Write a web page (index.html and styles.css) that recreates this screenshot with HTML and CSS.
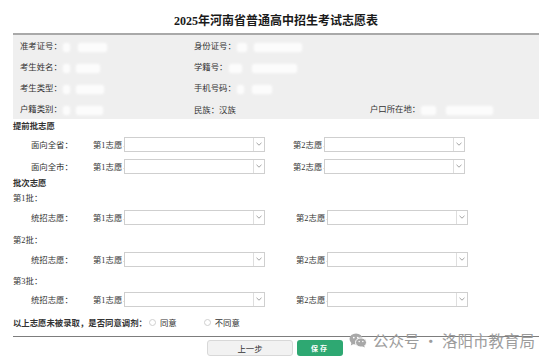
FILE: index.html
```html
<!DOCTYPE html>
<html lang="zh-CN">
  <head>
    <meta charset="UTF-8" />
    <title>2025年河南省普通高中招生考试志愿表</title>
    <link rel="stylesheet" href="styles.css">
  </head>
  <body>
    <div class="page">
      <h1 class="title">2025年河南省普通高中招生考试志愿表</h1>

      <div class="info">
        <div class="info-row">
          <span>准考证号：<i class="blur b7"></i><i class="blur b29 gap8"></i></span>
          <span>身份证号：<i class="blur b10"></i><i class="blur b48 gap7"></i></span>
          <span></span>
        </div>
        <div class="info-row">
          <span>考生姓名：<i class="blur b7"></i><i class="blur b24 gap6"></i></span>
          <span>学籍号：<i class="blur b13"></i><i class="blur b45 gap10"></i></span>
          <span></span>
        </div>
        <div class="info-row">
          <span>考生类型：<i class="blur b7"></i><i class="blur b28 gap6"></i></span>
          <span>手机号码：<i class="blur b7"></i><i class="blur b20 gap8"></i></span>
          <span></span>
        </div>
        <div class="info-row">
          <span>户籍类别：<i class="blur b7"></i><i class="blur b27 gap6"></i></span>
          <span>民族：汉族</span>
          <span>户口所在地：<i class="blur b15"></i><i class="blur b47 gap10"></i></span>
        </div>
      </div>

      <div class="sec-title">提前批志愿</div>
      <div class="choice-row">
        <span class="lbl">面向全省：</span>
        <div class="pick"><span class="name">第1志愿<b>-</b></span><div class="select"><span class="arrow"><svg width="6" height="4" viewBox="0 0 6 4"><path d="M0.5 0.8 L3 3.2 L5.5 0.8" fill="none" stroke="#999" stroke-width="0.9"/></svg></span></div></div>
        <div class="pick second"><span class="name">第2志愿<b>-</b></span><div class="select"><span class="arrow"><svg width="6" height="4" viewBox="0 0 6 4"><path d="M0.5 0.8 L3 3.2 L5.5 0.8" fill="none" stroke="#999" stroke-width="0.9"/></svg></span></div></div>
      </div>
      <div class="choice-row spaced">
        <span class="lbl">面向全市：</span>
        <div class="pick"><span class="name">第1志愿<b>-</b></span><div class="select"><span class="arrow"><svg width="6" height="4" viewBox="0 0 6 4"><path d="M0.5 0.8 L3 3.2 L5.5 0.8" fill="none" stroke="#999" stroke-width="0.9"/></svg></span></div></div>
        <div class="pick second"><span class="name">第2志愿<b>-</b></span><div class="select"><span class="arrow"><svg width="6" height="4" viewBox="0 0 6 4"><path d="M0.5 0.8 L3 3.2 L5.5 0.8" fill="none" stroke="#999" stroke-width="0.9"/></svg></span></div></div>
      </div>

      <div class="sec-title tall">批次志愿</div>
      <div class="batch">第1批：</div>
      <div class="choice-row batch-row">
        <span class="lbl">统招志愿：</span>
        <div class="pick"><span class="name">第1志愿<b>-</b></span><div class="select"><span class="arrow"><svg width="6" height="4" viewBox="0 0 6 4"><path d="M0.5 0.8 L3 3.2 L5.5 0.8" fill="none" stroke="#999" stroke-width="0.9"/></svg></span></div></div>
        <div class="pick second wide"><span class="name">第2志愿<b>-</b></span><div class="select"><span class="arrow"><svg width="6" height="4" viewBox="0 0 6 4"><path d="M0.5 0.8 L3 3.2 L5.5 0.8" fill="none" stroke="#999" stroke-width="0.9"/></svg></span></div></div>
      </div>
      <div class="batch b2">第2批：</div>
      <div class="choice-row batch-row">
        <span class="lbl">统招志愿：</span>
        <div class="pick"><span class="name">第1志愿<b>-</b></span><div class="select"><span class="arrow"><svg width="6" height="4" viewBox="0 0 6 4"><path d="M0.5 0.8 L3 3.2 L5.5 0.8" fill="none" stroke="#999" stroke-width="0.9"/></svg></span></div></div>
        <div class="pick second wide"><span class="name">第2志愿<b>-</b></span><div class="select"><span class="arrow"><svg width="6" height="4" viewBox="0 0 6 4"><path d="M0.5 0.8 L3 3.2 L5.5 0.8" fill="none" stroke="#999" stroke-width="0.9"/></svg></span></div></div>
      </div>
      <div class="batch b3">第3批：</div>
      <div class="choice-row batch-row last">
        <span class="lbl">统招志愿：</span>
        <div class="pick"><span class="name">第1志愿<b>-</b></span><div class="select"><span class="arrow"><svg width="6" height="4" viewBox="0 0 6 4"><path d="M0.5 0.8 L3 3.2 L5.5 0.8" fill="none" stroke="#999" stroke-width="0.9"/></svg></span></div></div>
        <div class="pick second wide"><span class="name">第2志愿<b>-</b></span><div class="select"><span class="arrow"><svg width="6" height="4" viewBox="0 0 6 4"><path d="M0.5 0.8 L3 3.2 L5.5 0.8" fill="none" stroke="#999" stroke-width="0.9"/></svg></span></div></div>
      </div>

      <div class="adjust">
        <strong>以上志愿未被录取，是否同意调剂：</strong>
        <span class="radio"></span><span class="opt">同意</span>
        <span class="radio far"></span><span class="opt">不同意</span>
      </div>

      <div class="actions">
        <button type="button" class="btn prev">上一步</button>
        <button type="button" class="btn save">保存</button>
      </div>

      <div class="watermark">
        <svg width="18" height="15" viewBox="0 0 18 15">
          <ellipse cx="7" cy="6" rx="6.5" ry="5.5" fill="#a8a8a8"/>
          <path d="M2.5 9.5 L1.8 12.5 L5 10.8 Z" fill="#a8a8a8"/>
          <ellipse cx="12" cy="9.5" rx="5.5" ry="4.6" fill="#a8a8a8" stroke="#fff" stroke-width="1"/>
          <path d="M15 12.5 L16 14.6 L13 13.3 Z" fill="#a8a8a8"/>
          <circle cx="4.8" cy="4.6" r="0.9" fill="#fff"/>
          <circle cx="8.8" cy="4.6" r="0.9" fill="#fff"/>
          <circle cx="10.2" cy="8.6" r="0.75" fill="#fff"/>
          <circle cx="13.8" cy="8.6" r="0.75" fill="#fff"/>
        </svg>
        <span>公众号 · 洛阳市教育局</span>
      </div>
    </div>
  </body>
</html>
```

FILE: styles.css
```css
* {
  box-sizing: border-box;
}
body {
  margin: 0;
  background-color: #fff;
  font-family: "Liberation Serif", "Noto Sans CJK SC", serif;
  font-size: 8.4px;
  color: #333;
}
.page {
  position: relative;
  height: 358px;
  padding-left: 13px;
}
.title {
  margin: 0;
  height: 33px;
  padding-top: 14px;
  line-height: 14px;
  text-align: center;
  font-size: 12px;
  font-weight: bold;
  color: #1a1a1a;
}
.info {
  background-color: #efefef;
  border-top: 2px solid #a9a9a9;
  height: 86px;
}
.info-row {
  display: grid;
  grid-template-columns: 174px 176px auto;
  height: 21px;
  align-items: center;
  padding-left: 7px;
  white-space: nowrap;
}
.blur {
  display: inline-block;
  height: 9px;
  background-color: #fff;
  opacity: 0.85;
  filter: blur(1.1px);
  border-radius: 2px;
  vertical-align: middle;
  margin-left: 1px;
}
.b7 { width: 7px; }
.b10 { width: 10px; }
.b13 { width: 13px; }
.b15 { width: 15px; }
.b20 { width: 20px; }
.b24 { width: 24px; }
.b27 { width: 27px; }
.b28 { width: 28px; }
.b29 { width: 29px; }
.b45 { width: 45px; }
.b47 { width: 47px; }
.b48 { width: 48px; }
.gap6 { margin-left: 6px; }
.gap7 { margin-left: 7px; }
.gap8 { margin-left: 8px; }
.gap10 { margin-left: 10px; }

.sec-title {
  font-weight: bold;
  height: 16px;
  line-height: 16px;
}
.sec-title.tall {
  height: 17px;
  line-height: 17px;
}
.choice-row {
  display: flex;
  align-items: center;
  height: 18px;
}
.choice-row.spaced {
  margin-top: 4px;
}
.choice-row.batch-row {
  margin-top: 2px;
}
.choice-row.last {
  margin-top: 1px;
}
.lbl {
  width: 80px;
  padding-left: 18px;
  white-space: nowrap;
}
.pick {
  display: flex;
  align-items: center;
}
.pick.second {
  margin-left: 28px;
}
.pick.second.wide {
  margin-left: 31px;
}
.name {
  width: 31px;
  white-space: nowrap;
}
.name b {
  font-weight: normal;
  color: #999;
  font-size: 6px;
  margin-left: 1px;
}
.select {
  width: 141px;
  height: 15px;
  border: 1px solid #cfcfcf;
  background-color: #fff;
  display: flex;
  justify-content: flex-end;
}
.arrow {
  width: 11px;
  border-left: 1px solid #dedede;
  display: flex;
  align-items: center;
  justify-content: center;
}
.batch {
  height: 14px;
  line-height: 14px;
}
.batch.b2 {
  margin-top: 8px;
}
.batch.b3 {
  margin-top: 7px;
}
.adjust {
  margin-top: 6px;
  height: 16px;
  display: flex;
  align-items: center;
  white-space: nowrap;
}
.radio {
  width: 7px;
  height: 7px;
  border: 1px solid #cfcfcf;
  border-radius: 50%;
  margin-left: 2px;
}
.radio.far {
  margin-left: 27px;
}
.opt {
  margin-left: 4px;
}
.actions {
  margin-top: 6px;
  border-top: 1px solid #7d7d7d;
  padding-top: 3px;
  padding-left: 194px;
  display: flex;
  gap: 4px;
}
.btn {
  height: 16px;
  font-family: inherit;
  font-size: 8.4px;
  border-radius: 3px;
  padding: 0;
  margin: 0;
}
.prev {
  width: 86px;
  background-color: #f2f2f2;
  border: 1px solid #d8d8d8;
  color: #333;
}
.save {
  width: 46px;
  background-color: #2ea872;
  border: none;
  color: #fff;
  font-size: 7px;
  font-weight: bold;
  letter-spacing: 2px;
}
.watermark {
  position: absolute;
  right: 4px;
  top: 329px;
  display: flex;
  align-items: center;
  gap: 6px;
  font-family: "Noto Sans CJK SC", sans-serif;
  font-size: 15.5px;
  color: #9c9c9c;
  white-space: nowrap;
}
```
